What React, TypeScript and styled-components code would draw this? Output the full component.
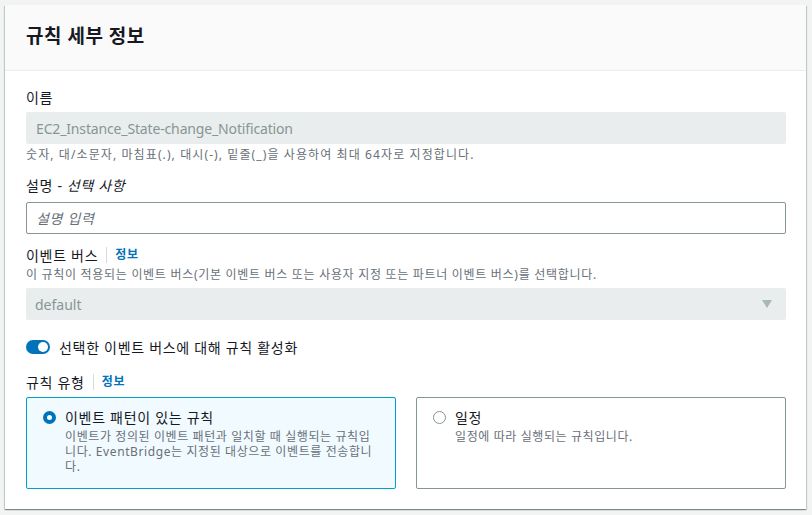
import { useState } from 'react';
import styled, { createGlobalStyle } from 'styled-components';

const GlobalStyle = createGlobalStyle`
  html, body {
    margin: 0;
    padding: 0;
    background-color: #f2f3f3;
  }
  body {
    font-family: 'Noto Sans', 'Noto Sans CJK KR', sans-serif;
    color: #16191f;
    letter-spacing: 0.7px;
  }
  * {
    box-sizing: border-box;
  }
`;

const Page = styled.div`
  padding: 5px 6px 6px 5px;
`;

const Card = styled.div`
  background-color: white;
  box-shadow: 0 1px 1px 0 rgba(0, 28, 36, 0.3), 1px 1px 1px 0 rgba(0, 28, 36, 0.15),
    -1px 1px 1px 0 rgba(0, 28, 36, 0.15);
`;

const Header = styled.div`
  height: 66px;
  display: flex;
  align-items: center;
  padding: 0 20px 5px 21px;
  background-color: #fafafa;
  border-bottom: 1px solid #eaeded;
`;

const Title = styled.h2`
  margin: 0;
  font-size: 19px;
  font-weight: 700;
  letter-spacing: 0.5px;
`;

const Body = styled.div`
  padding: 15px 20px 20px 21px;
`;

const Field = styled.div<{ $gap?: number }>`
  margin-top: ${({ $gap }) => $gap ?? 0}px;
`;

const LabelRow = styled.div`
  display: flex;
  align-items: center;
  height: 22px;
  font-size: 14px;
`;

const Optional = styled.i`
  margin-left: 4px;
`;

const InfoLink = styled.a`
  margin-left: 8px;
  padding-left: 8px;
  border-left: 1px solid #d5dbdb;
  line-height: 16px;
  font-size: 12px;
  font-weight: 700;
  color: #0073bb;
  cursor: pointer;
`;

const Hint = styled.div<{ $top?: number; $spacing?: number }>`
  margin-top: ${({ $top }) => $top ?? 0}px;
  font-size: 12px;
  line-height: 16px;
  letter-spacing: ${({ $spacing }) => $spacing ?? 0.7}px;
  color: #687078;
`;

const Input = styled.input<{ $top?: number }>`
  display: block;
  width: 100%;
  height: 32px;
  margin-top: ${({ $top }) => $top ?? 4}px;
  padding: 0 9px;
  font-family: inherit;
  font-size: 14px;
  letter-spacing: -0.15px;
  color: #16191f;
  background-color: white;
  border: 1px solid #879596;
  border-radius: 2px;
  outline: none;

  &:disabled {
    background-color: #eaeded;
    border-color: #eaeded;
    color: #879596;
  }

  &::placeholder {
    font-style: italic;
    letter-spacing: 0.7px;
    color: #687078;
  }
`;

const Select = styled.div`
  display: flex;
  align-items: center;
  justify-content: space-between;
  height: 32px;
  margin-top: 5px;
  padding: 0 14px 0 9px;
  font-size: 14px;
  letter-spacing: 0;
  color: #879596;
  background-color: #eaeded;
  border-radius: 2px;
`;

const Caret = styled.span`
  width: 0;
  height: 0;
  border-left: 5px solid transparent;
  border-right: 5px solid transparent;
  border-top: 8px solid #aab7b8;
`;

const ToggleRow = styled.label`
  display: flex;
  align-items: center;
  gap: 9px;
  margin-top: 16px;
  height: 22px;
  font-size: 14px;
  cursor: pointer;
`;

const Track = styled.span<{ $on: boolean }>`
  position: relative;
  width: 24px;
  height: 14px;
  border-radius: 7px;
  background-color: ${({ $on }) => ($on ? '#0073bb' : '#879596')};

  &::after {
    content: '';
    position: absolute;
    top: 2px;
    left: ${({ $on }) => ($on ? '12px' : '2px')};
    width: 10px;
    height: 10px;
    border-radius: 50%;
    background-color: white;
  }
`;

const Tiles = styled.div`
  display: grid;
  grid-template-columns: 1fr 1fr;
  gap: 20px;
  margin-top: 4px;
`;

const Tile = styled.div<{ $selected: boolean }>`
  display: flex;
  gap: 9px;
  height: 92px;
  padding: 11px 16px 0 16px;
  border: 1px solid ${({ $selected }) => ($selected ? '#00a1c9' : '#879596')};
  background-color: ${({ $selected }) => ($selected ? '#f1faff' : 'white')};
  border-radius: 2px;
  cursor: pointer;
`;

const Radio = styled.span<{ $checked: boolean }>`
  flex: none;
  width: 13px;
  height: 13px;
  margin-top: 2px;
  border-radius: 50%;
  border: ${({ $checked }) => ($checked ? '4px solid #0073bb' : '1.5px solid #879596')};
  background-color: white;
`;

const TileText = styled.div`
  padding-right: 4px;
`;

const TileTitle = styled.div`
  font-size: 14px;
  line-height: 17px;
`;

const TileDesc = styled.div`
  margin-top: 3px;
  font-size: 12px;
  line-height: 15px;
  letter-spacing: 0.6px;
  color: #687078;
`;

const ruleTypes = [
  {
    key: 'pattern',
    title: '이벤트 패턴이 있는 규칙',
    desc: '이벤트가 정의된 이벤트 패턴과 일치할 때 실행되는 규칙입니다. EventBridge는 지정된 대상으로 이벤트를 전송합니다.',
  },
  {
    key: 'schedule',
    title: '일정',
    desc: '일정에 따라 실행되는 규칙입니다.',
  },
];

export default function App() {
  const [enabled, setEnabled] = useState(true);
  const [ruleType, setRuleType] = useState('pattern');

  return (
    <Page>
      <GlobalStyle />
      <Card>
        <Header>
          <Title>규칙 세부 정보</Title>
        </Header>
        <Body>
          <Field>
            <LabelRow>이름</LabelRow>
            <Input disabled value="EC2_Instance_State-change_Notification" readOnly />
            <Hint $top={3} $spacing={1.1}>
              숫자, 대/소문자, 마침표(.), 대시(-), 밑줄(_)을 사용하여 최대 64자로 지정합니다.
            </Hint>
          </Field>

          <Field $gap={11}>
            <LabelRow>
              설명 -<Optional>선택 사항</Optional>
            </LabelRow>
            <Input $top={6} placeholder="설명 입력" />
          </Field>

          <Field $gap={10}>
            <LabelRow>
              이벤트 버스
              <InfoLink>정보</InfoLink>
            </LabelRow>
            <Hint $top={1}>
              이 규칙이 적용되는 이벤트 버스(기본 이벤트 버스 또는 사용자 지정 또는 파트너 이벤트 버스)를 선택합니다.
            </Hint>
            <Select>
              default
              <Caret />
            </Select>
          </Field>

          <ToggleRow onClick={() => setEnabled((v) => !v)}>
            <Track $on={enabled} />
            선택한 이벤트 버스에 대해 규칙 활성화
          </ToggleRow>

          <Field $gap={13}>
            <LabelRow>
              규칙 유형
              <InfoLink>정보</InfoLink>
            </LabelRow>
            <Tiles>
              {ruleTypes.map(({ key, title, desc }) => (
                <Tile key={key} $selected={ruleType === key} onClick={() => setRuleType(key)}>
                  <Radio $checked={ruleType === key} />
                  <TileText>
                    <TileTitle>{title}</TileTitle>
                    <TileDesc>{desc}</TileDesc>
                  </TileText>
                </Tile>
              ))}
            </Tiles>
          </Field>
        </Body>
      </Card>
    </Page>
  );
}
